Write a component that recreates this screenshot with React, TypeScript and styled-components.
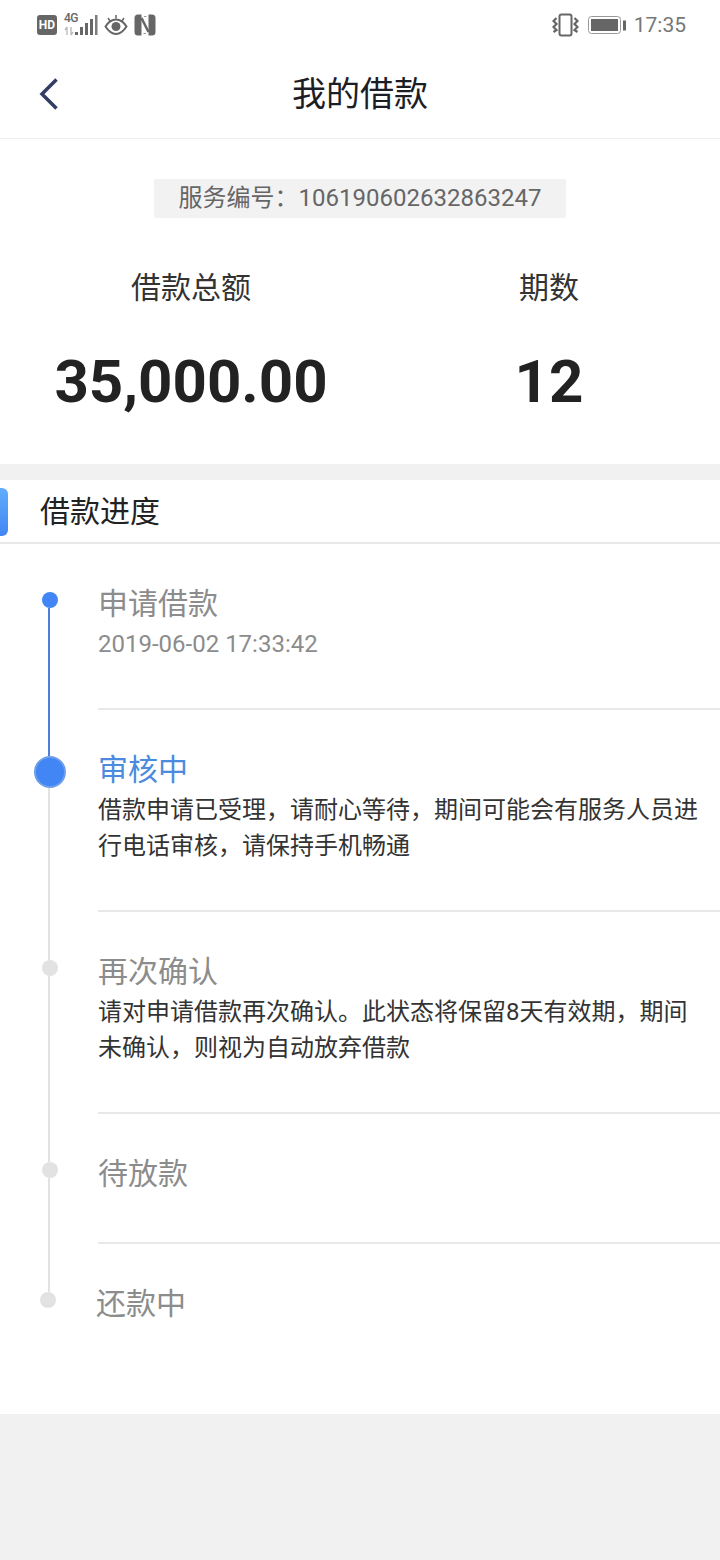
import styled, { createGlobalStyle } from "styled-components";

const GlobalStyle = createGlobalStyle`
	html, body {
		margin: 0;
		padding: 0;
		background: #f1f1f1;
		font-family: "Roboto", "Noto Sans CJK SC", sans-serif;
	}
	* {
		box-sizing: border-box;
	}
`;

const Page = styled.div`
	width: 720px;
	height: 1560px;
	background: #f1f1f1;
	overflow: hidden;
`;

const StatusBar = styled.div`
	height: 54px;
	padding: 11px 34px 0 37px;
	background: #fff;
	display: flex;
	justify-content: space-between;
	align-items: flex-start;
`;

const StatusGroup = styled.div`
	display: flex;
	align-items: center;
	height: 28px;
`;

const HdBadge = styled.span`
	width: 20px;
	height: 20px;
	border-radius: 3px;
	background: #666;
	color: #fff;
	font: 700 12px/20px "Roboto", sans-serif;
	text-align: center;
	margin-right: 7px;
`;

const SignalWrap = styled.div`
	position: relative;
	width: 34px;
	height: 22px;
	margin-right: 6px;
`;

const NetLabel = styled.span`
	position: absolute;
	left: 0;
	top: -1px;
	color: #666;
	font: 500 12px/11px "Roboto", sans-serif;
	letter-spacing: -0.5px;
`;

const Clock = styled.span`
	color: #777;
	font-size: 21px;
	line-height: 28px;
	margin-left: 7px;
`;

const Header = styled.div`
	height: 85px;
	background: #fff;
	border-bottom: 1px solid #eeeeee;
	display: grid;
	grid-template-columns: 1fr auto 1fr;
	align-items: center;
`;

const BackButton = styled.div`
	display: flex;
	align-items: center;
	padding-left: 39px;
`;

const Title = styled.div`
	color: #1d1d26;
	font-size: 34px;
	line-height: 40px;
	margin-top: -4px;
`;

const Summary = styled.div`
	height: 325px;
	background: #fff;
	padding-top: 40px;
`;

const SerialPill = styled.div`
	width: 412px;
	height: 39px;
	margin: 0 0 0 154px;
	background: #f2f2f2;
	border-radius: 2px;
	color: #666;
	font-size: 24px;
	line-height: 39px;
	text-align: center;
`;

const Totals = styled.div`
	display: grid;
	grid-template-columns: 382px 334px;
	margin-top: 50px;
`;

const TotalCell = styled.div`
	text-align: center;
`;

const TotalLabel = styled.div`
	color: #333;
	font-size: 30px;
	line-height: 40px;
`;

const TotalValue = styled.div`
	margin-top: 35px;
	color: #222;
	font-size: 60px;
	font-weight: 700;
	line-height: 78px;
`;

const SectionHead = styled.div`
	margin-top: 16px;
	height: 64px;
	background: #fff;
	border-bottom: 2px solid #e8e8e8;
	display: flex;
	align-items: flex-start;
	padding-top: 8px;
`;

const SectionMark = styled.div`
	width: 8px;
	height: 48px;
	border-radius: 0 6px 6px 0;
	background: linear-gradient(180deg, #62adfb, #4285f4);
`;

const SectionTitle = styled.div`
	margin-left: 32px;
	color: #222;
	font-size: 30px;
	line-height: 48px;
`;

const Steps = styled.div`
	background: #fff;
`;

const StepRow = styled.div<{ $height: number }>`
	height: ${(p) => p.$height}px;
	display: grid;
	grid-template-columns: 98px 1fr;
`;

const Rail = styled.div`
	display: flex;
	flex-direction: column;
	align-items: center;
	width: 100px;
`;

const Segment = styled.div<{ $color: string; $height?: number }>`
	width: 2px;
	margin-right: 2px;
	background: ${(p) => p.$color};
	${(p) => (p.$height !== undefined ? `height: ${p.$height}px;` : "flex: 1;")}
`;

const Dot = styled.div<{ $size: number; $color: string; $offset?: boolean }>`
	flex: none;
	width: ${(p) => p.$size}px;
	height: ${(p) => p.$size}px;
	border-radius: 50%;
	background: ${(p) => p.$color};
	${(p) => (p.$size > 20 ? "border: 2px solid #6f9fea;" : "")}
	${(p) => (p.$offset ? "margin-right: 4px;" : "")}
`;

const StepBody = styled.div<{ $last?: boolean }>`
	padding-top: 40px;
	margin-left: ${(p) => (p.$last ? -2 : 0)}px;
	border-bottom: ${(p) => (p.$last ? "none" : "2px solid #e8e8e8")};
`;

const StepTitle = styled.div<{ $active?: boolean }>`
	color: ${(p) => (p.$active ? "#4a8be0" : "#8c8c8c")};
	font-size: 30px;
	line-height: 40px;
`;

const StepDate = styled.div`
	margin-top: 4px;
	color: #8c8c8c;
	font-size: 24px;
	line-height: 32px;
`;

const StepText = styled.div`
	margin-top: 2px;
	color: #333;
	font-size: 24px;
	line-height: 36px;
	width: 610px;
`;

const Grey = "#e2e2e2";
const Blue = "#4285f4";

const steps = [
	{
		title: "申请借款",
		date: "2019-06-02 17:33:42",
		height: 166,
		above: 48,
		aboveColor: "transparent",
		dot: 16,
		dotColor: Blue,
		below: "#4a80dc",
	},
	{
		title: "审核中",
		active: true,
		text: "借款申请已受理，请耐心等待，期间可能会有服务人员进行电话审核，请保持手机畅通",
		height: 202,
		above: 46,
		aboveColor: "#4a80dc",
		dot: 32,
		dotColor: Blue,
		below: Grey,
	},
	{
		title: "再次确认",
		text: "请对申请借款再次确认。此状态将保留8天有效期，期间未确认，则视为自动放弃借款",
		height: 202,
		above: 48,
		aboveColor: Grey,
		dot: 16,
		dotColor: Grey,
		below: Grey,
	},
	{
		title: "待放款",
		height: 130,
		above: 48,
		aboveColor: Grey,
		dot: 16,
		dotColor: Grey,
		below: Grey,
	},
	{
		title: "还款中",
		height: 170,
		above: 48,
		aboveColor: Grey,
		dot: 16,
		dotColor: Grey,
		below: "transparent",
		last: true,
	},
];

const SignalIcon = () => (
	<svg width="34" height="22" viewBox="0 0 34 22" style={{ position: "absolute", left: 0, top: 0 }}>
		<g fill="#666">
			<rect x="11" y="18" width="3" height="3" />
			<rect x="16" y="13" width="3" height="8" />
			<rect x="21" y="9" width="3" height="12" />
			<rect x="26" y="5" width="3" height="16" />
			<rect x="31" y="1" width="2.5" height="20" opacity="0.85" />
		</g>
		<path d="M3 13v8M3 13l-2 3M7 21v-8M7 21l2-3" stroke="#bbb" strokeWidth="1.4" fill="none" />
	</svg>
);

const EyeIcon = () => (
	<svg width="24" height="22" viewBox="0 0 24 22" style={{ marginRight: 6 }}>
		<path d="M1.5 12.5C5 7 8.5 5.5 12 5.5s7 1.5 10.5 7C19 18 15.5 20 12 20s-7-2-10.500-7.500z" fill="none" stroke="#666" strokeWidth="2" />
		<circle cx="12" cy="12.5" r="4.500" fill="#666" />
		<path d="M4 4l2 3M12 1v3.500M20 4l-2 3" stroke="#666" strokeWidth="1.500" />
	</svg>
);

const NfcIcon = () => (
	<svg width="22" height="22" viewBox="0 0 22 22">
		<path d="M4 0.500h3.500v21H4a3.500 3.500 0 0 1-3.500-3.500V4A3.500 3.500 0 0 1 4 0.500z" fill="#666" />
		<path d="M18 0.500h-3.500v21H18a3.500 3.500 0 0 0 3.500-3.500V4A3.500 3.500 0 0 0 18 0.500z" fill="#666" />
		<path d="M7.500 4L14.500 18" stroke="#666" strokeWidth="2.500" />
		<path d="M10 2.500h2.500M9.500 19.500h2.500" stroke="#999" strokeWidth="1" />
	</svg>
);

const VibrateIcon = () => (
	<svg width="27" height="24" viewBox="0 0 27 24">
		<rect x="7.500" y="1.500" width="12" height="21" rx="2" fill="none" stroke="#666" strokeWidth="2" />
		<path d="M4.500 5L1.500 8l3 3-3 3 3 3-3 2M22.500 5l3 3-3 3 3 3-3 3 3 2" fill="none" stroke="#666" strokeWidth="2.200" />
	</svg>
);

const BatteryIcon = () => (
	<svg width="39" height="20" viewBox="0 0 39 20" style={{ marginLeft: 9 }}>
		<rect x="0.500" y="1.500" width="32" height="17" rx="3" fill="none" stroke="#999" strokeWidth="1" />
		<rect x="3" y="4" width="27" height="12" fill="#666" />
		<rect x="35" y="5.500" width="3" height="10" fill="#666" />
	</svg>
);

const BackIcon = () => (
	<svg width="20" height="34" viewBox="0 0 20 34" style={{ marginTop: -4 }}>
		<path d="M17.500 2.500L3 17l14.500 14.500" fill="none" stroke="#333d63" strokeWidth="3.500" />
	</svg>
);

export default function App() {
	return (
		<Page>
			<GlobalStyle />
			<StatusBar>
				<StatusGroup>
					<HdBadge>HD</HdBadge>
					<SignalWrap>
						<NetLabel>4G</NetLabel>
						<SignalIcon />
					</SignalWrap>
					<EyeIcon />
					<NfcIcon />
				</StatusGroup>
				<StatusGroup>
					<VibrateIcon />
					<BatteryIcon />
					<Clock>17:35</Clock>
				</StatusGroup>
			</StatusBar>
			<Header>
				<BackButton>
					<BackIcon />
				</BackButton>
				<Title>我的借款</Title>
			</Header>
			<Summary>
				<SerialPill>服务编号：106190602632863247</SerialPill>
				<Totals>
					<TotalCell>
						<TotalLabel>借款总额</TotalLabel>
						<TotalValue>35,000.00</TotalValue>
					</TotalCell>
					<TotalCell>
						<TotalLabel>期数</TotalLabel>
						<TotalValue>12</TotalValue>
					</TotalCell>
				</Totals>
			</Summary>
			<SectionHead>
				<SectionMark />
				<SectionTitle>借款进度</SectionTitle>
			</SectionHead>
			<Steps>
				{steps.map((s) => (
					<StepRow key={s.title} $height={s.height}>
						<Rail>
							<Segment $color={s.aboveColor} $height={s.above} />
							<Dot $size={s.dot} $color={s.dotColor} $offset={s.last} />
							<Segment $color={s.below} />
						</Rail>
						<StepBody $last={s.last}>
							<StepTitle $active={s.active}>{s.title}</StepTitle>
							{s.date && <StepDate>{s.date}</StepDate>}
							{s.text && <StepText>{s.text}</StepText>}
						</StepBody>
					</StepRow>
				))}
			</Steps>
		</Page>
	);
}
